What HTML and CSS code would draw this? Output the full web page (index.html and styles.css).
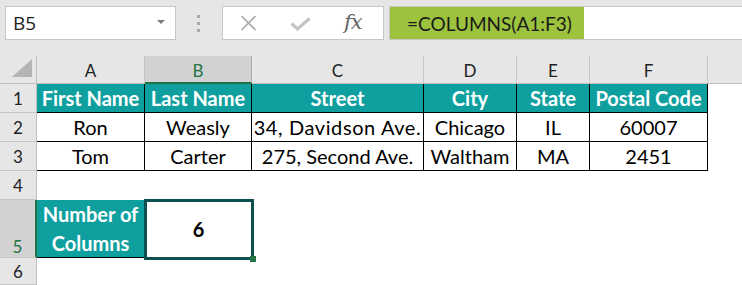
FILE: index.html
```html
<!DOCTYPE html>
<html>
<head>
<meta charset="utf-8">
<link rel="stylesheet" href="styles.css">
</head>
<body>
<div class="app">
  <div class="toolbar">
    <div class="namebox"><span class="ref">B5</span><span class="caret"></span></div>
    <div class="grip"><i></i><i></i><i></i></div>
    <div class="fxbox">
      <svg class="ico-x" width="17" height="16" viewBox="0 0 17 16"><path d="M1.5 1L15.5 15M15.5 1L1.5 15" stroke="#a9a9a9" stroke-width="1.7" fill="none"/></svg>
      <svg class="ico-check" width="21" height="14" viewBox="0 0 21 14"><path d="M1.5 6.5L7.5 12L19.5 1.5" stroke="#c4c4c4" stroke-width="3.2" fill="none"/></svg>
      <span class="fx">fx</span>
    </div>
    <div class="formula"><span class="fill">=COLUMNS(A1:F3)</span></div>
  </div>
  <div class="sheet">
    <div class="corner"><span class="tri"></span></div>
    <div class="ch">A</div>
    <div class="ch sel">B</div>
    <div class="ch">C</div>
    <div class="ch">D</div>
    <div class="ch">E</div>
    <div class="ch">F</div>
    <div class="ch last"></div>

    <div class="rh">1</div>
    <div class="c t hd">First Name</div>
    <div class="c t hd">Last Name</div>
    <div class="c t hd">Street</div>
    <div class="c t hd">City</div>
    <div class="c t hd">State</div>
    <div class="c t hd">Postal Code</div>
    <div class="c"></div>

    <div class="rh">2</div>
    <div class="c t">Ron</div>
    <div class="c t">Weasly</div>
    <div class="c t addr">34, Davidson Ave.</div>
    <div class="c t">Chicago</div>
    <div class="c t">IL</div>
    <div class="c t">60007</div>
    <div class="c"></div>

    <div class="rh">3</div>
    <div class="c t">Tom</div>
    <div class="c t">Carter</div>
    <div class="c t">275, Second Ave.</div>
    <div class="c t">Waltham</div>
    <div class="c t">MA</div>
    <div class="c t">2451</div>
    <div class="c"></div>

    <div class="rh">4</div>
    <div class="c wide"></div>

    <div class="rh rsel">5</div>
    <div class="c t hd wrap">Number of Columns</div>
    <div class="c active">6</div>
    <div class="c wide5"></div>

    <div class="rh">6</div>
    <div class="c wide"></div>
  </div>
</div>
</body>
</html>
```

FILE: styles.css
```css
* { box-sizing: border-box; }
html, body { margin: 0; padding: 0; }
body {
  width: 742px;
  height: 285px;
  overflow: hidden;
  background: #ffffff;
  font-family: Lato, "Liberation Sans", sans-serif;
}
.app { width: 742px; height: 285px; display: flex; flex-direction: column; }

.toolbar {
  height: 56px;
  background: #e6e6e6;
  display: flex;
  align-items: flex-start;
  padding-top: 6px;
  flex: none;
}
.namebox {
  margin-left: 5px;
  width: 171px;
  height: 34px;
  background: #fff;
  border: 1px solid #c6c6c6;
  display: flex;
  align-items: center;
  justify-content: space-between;
  padding: 0 10px 0 7px;
}
.ref {
  font-family: "Open Sans", sans-serif;
  font-size: 19px;
  color: #222;
  line-height: 1;
}
.caret {
  width: 0; height: 0;
  border-left: 4px solid transparent;
  border-right: 4px solid transparent;
  border-top: 4px solid #7a7a7a;
  margin-top: -3px;
}
.grip {
  width: 46px;
  height: 34px;
  display: flex;
  flex-direction: column;
  align-items: center;
  justify-content: center;
  gap: 4px;
  padding-right: 2px;
}
.grip i { display: block; width: 3px; height: 3px; background: #a8a8a8; }
.fxbox {
  width: 162px;
  height: 34px;
  background: #fff;
  border: 1px solid #c6c6c6;
  display: flex;
  align-items: center;
  padding-left: 17px;
}
.ico-x { margin-right: 36px; }
.ico-check { margin-right: 33px; margin-top: 2px; margin-left: -3px; }
.fx {
  font-family: "DejaVu Serif", "Liberation Serif", serif;
  font-style: italic;
  font-size: 21px;
  color: #666;
  letter-spacing: -1px;
  margin-top: -2px;
}
.formula {
  flex: 1;
  margin-left: 5px;
  height: 34px;
  background: #fff;
  border-top: 1px solid #c6c6c6;
  border-bottom: 1px solid #c6c6c6;
  border-left: 1px solid #c6c6c6;
  display: flex;
  align-items: stretch;
}
.fill {
  width: 194px;
  background: #9cc23e;
  padding-left: 17px;
  display: flex;
  align-items: center;
  font-size: 19px;
  color: #1a1a1a;
}

.sheet {
  flex: 1;
  display: grid;
  grid-template-columns: 37px 108px 107px 172px 93px 73px 118px 1fr;
  grid-template-rows: 28px 29px 29px 29px 29px 58px 27px;
}
.corner {
  background: #e6e6e6;
  border-right: 1px solid #bfbfbf;
  border-bottom: 1px solid #bfbfbf;
  position: relative;
}
.tri {
  position: absolute;
  right: 4px;
  bottom: 6px;
  width: 0; height: 0;
  border-left: 20px solid transparent;
  border-bottom: 18px solid #b4b4b4;
}
.ch {
  background: #e6e6e6;
  border-right: 1px solid #c6c6c6;
  border-bottom: 1px solid #bfbfbf;
  display: flex;
  align-items: center;
  justify-content: center;
  font-size: 17px;
  color: #222;
  padding-top: 2px;
}
.ch.sel {
  background: #d2d2d2;
  color: #217346;
  border-bottom: 2px solid #217346;
  border-right-color: #ababab;
}
.ch.last { border-right: none; }
.rh {
  background: #e6e6e6;
  border-right: 1px solid #bfbfbf;
  border-bottom: 1px solid #c6c6c6;
  display: flex;
  align-items: center;
  justify-content: center;
  font-size: 17px;
  color: #222;
}
.rh.rsel {
  background: #d2d2d2;
  color: #217346;
  border-right: 2px solid #217346;
  align-items: flex-end;
  padding-bottom: 0;
}
.c {
  background: #fff;
  display: flex;
  align-items: center;
  justify-content: center;
  font-size: 20px;
  color: #000;
  white-space: nowrap;
}
.addr { letter-spacing: 0.6px; }
.t {
  border-right: 1px solid #000;
  border-bottom: 1px solid #000;
}
.hd {
  background: #0f9f9f;
  color: #fff;
  font-weight: 700;
}
.wrap {
  white-space: normal;
  text-align: center;
  line-height: 29px;
  padding: 0 4px;
}
.wide { grid-column: 2 / 9; }
.wide5 { grid-column: 4 / 9; }
.active {
  position: relative;
  font-weight: 700;
}
.active::after {
  content: "";
  position: absolute;
  left: -1px;
  top: -1px;
  right: -2px;
  bottom: -2px;
  border: 3px solid #0e4f4f;
}
.active::before {
  content: "";
  position: absolute;
  right: -4px;
  bottom: -4px;
  width: 6px;
  height: 6px;
  background: #217346;
  z-index: 2;
}
```
